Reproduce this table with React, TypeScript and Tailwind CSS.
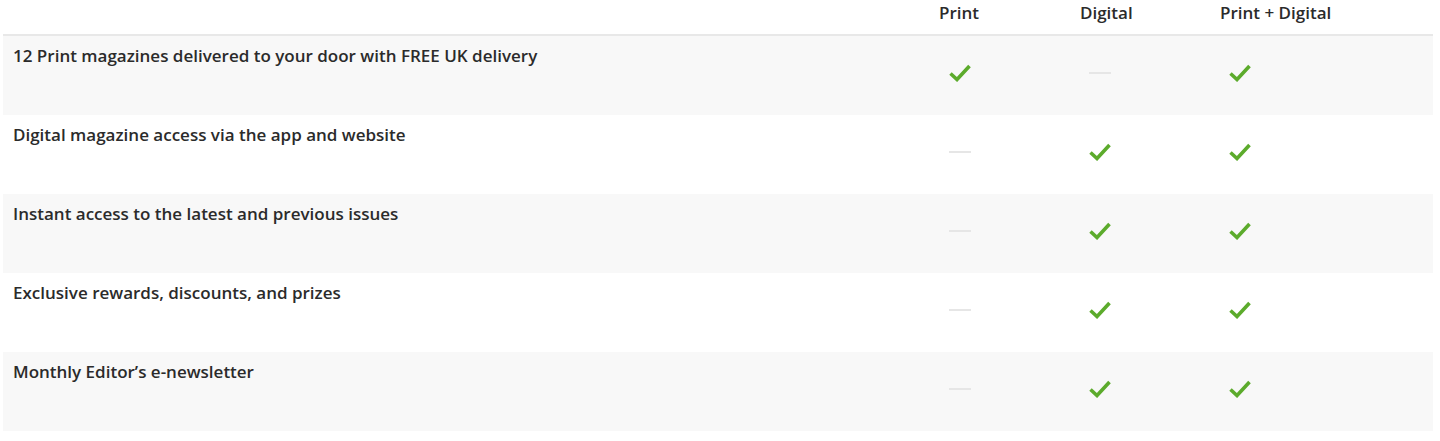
import React from "react";

const rows: { label: string; cells: boolean[] }[] = [
  { label: "12 Print magazines delivered to your door with FREE UK delivery", cells: [true, false, true] },
  { label: "Digital magazine access via the app and website", cells: [false, true, true] },
  { label: "Instant access to the latest and previous issues", cells: [false, true, true] },
  { label: "Exclusive rewards, discounts, and prizes", cells: [false, true, true] },
  { label: "Monthly Editor\u2019s e-newsletter", cells: [false, true, true] },
];

function Check() {
  return (
    <svg width="22" height="18" viewBox="0 0 22 18" className="block">
      <path d="M1.5 9.5 L8 15.5 L20.5 2" fill="none" stroke="#5cab2c" strokeWidth="3.6" strokeLinecap="butt" strokeLinejoin="miter" />
    </svg>
  );
}

function Dash() {
  return <div className="w-[22px] h-[2px] bg-[#e6e6e6]" />;
}

export default function App() {
  return (
    <div className="w-[1440px] h-[441px] bg-white font-['Open_Sans',sans-serif] text-[#2b2b2b]">
      <div className="mx-[3px] w-[1430px]">
        <div className="grid grid-cols-[887px_140px_140px_140px_1fr] h-[36px] items-start border-b-2 border-[#e8e8e8]">
          <div />
          <div className="pl-[49px] text-[17px] font-semibold leading-[26px] whitespace-nowrap">Print</div>
          <div className="pl-[50px] text-[17px] font-semibold leading-[26px] whitespace-nowrap">Digital</div>
          <div className="pl-[50px] text-[17px] font-semibold leading-[26px] whitespace-nowrap">Print + Digital</div>
          <div />
        </div>
        {rows.map((r, i) => (
          <div
            key={i}
            className={`grid grid-cols-[887px_140px_140px_140px_1fr] h-[79px] ${i % 2 === 0 ? "bg-[#f8f8f8]" : "bg-white"}`}
          >
            <div className="pl-[10px] pt-[7px] text-[17px] font-semibold leading-[26px]">{r.label}</div>
            {r.cells.map((c, j) => (
              <div key={j} className="flex items-center justify-center pb-[6px]">
                {c ? <Check /> : <Dash />}
              </div>
            ))}
            <div />
          </div>
        ))}
      </div>
    </div>
  );
}
